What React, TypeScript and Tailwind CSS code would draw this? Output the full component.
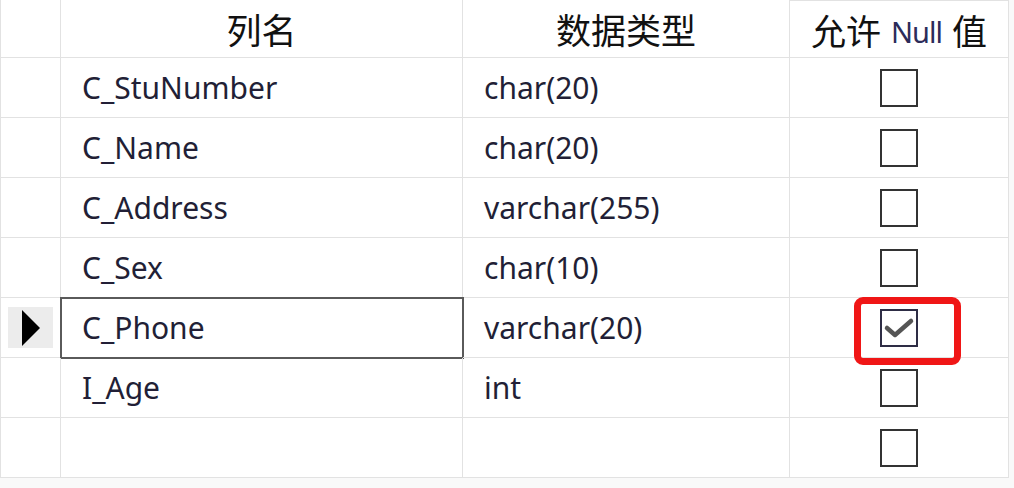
import React from "react";

type Row = { name: string; type: string; checked: boolean; selected?: boolean };

const rows: Row[] = [
  { name: "C_StuNumber", type: "char(20)", checked: false },
  { name: "C_Name", type: "char(20)", checked: false },
  { name: "C_Address", type: "varchar(255)", checked: false },
  { name: "C_Sex", type: "char(10)", checked: false },
  { name: "C_Phone", type: "varchar(20)", checked: true, selected: true },
  { name: "I_Age", type: "int", checked: false },
  { name: "", type: "", checked: false },
];

const font = { fontFamily: '"Noto Sans", "Noto Sans CJK SC", sans-serif' };

function CheckBox({ checked }: { checked: boolean }) {
  return (
    <div
      className={
        "w-[38px] h-[38px] border-2 bg-white flex items-center justify-center " +
        (checked ? "border-[#2e2d45]" : "border-[#333333]")
      }
    >
      {checked && (
        <svg width="32" height="26" viewBox="0 0 32 26">
          <path
            d="M4 13 L12 20 L28 6"
            fill="none"
            stroke="#555555"
            strokeWidth="4.5"
            strokeLinecap="round"
            strokeLinejoin="round"
          />
        </svg>
      )}
    </div>
  );
}

export default function App() {
  return (
    <div className="w-[1014px] h-[488px] bg-[#f9f9f9] overflow-hidden" style={font}>
      <div className="w-[1008px] bg-white grid grid-cols-[60px_402px_327px_219px] border-l border-[#e2e2e2]">
        {/* header */}
        <div className="h-[58px] border-r border-b border-[#e2e2e2]" />
        <div className="h-[58px] border-r border-b border-[#e2e2e2] flex items-center justify-center pt-[6px] text-[35px] text-[#111]">
          列名
        </div>
        <div className="h-[58px] border-r border-b border-[#e2e2e2] flex items-center justify-center pt-[6px] text-[35px] text-[#111]">
          数据类型
        </div>
        <div className="h-[58px] border-r border-b border-t border-[#e2e2e2] flex items-center justify-center pt-[6px] text-[35px] text-[#111]">
          <span>允许</span>
          <span className="text-[29px] text-[#2c2c5a] mx-[10px] tracking-[-1px]">Null</span>
          <span>值</span>
        </div>

        {rows.map((r, i) => (
          <React.Fragment key={i}>
            <div className="h-[60px] border-r border-b border-[#e2e2e2] flex items-center justify-center">
              {r.selected && (
                <div className="w-[45px] h-[41px] bg-[#ececec] flex items-center justify-center">
                  <svg width="20" height="36" viewBox="0 0 20 36">
                    <path d="M1 0 L19 18 L1 36 Z" fill="#000" />
                  </svg>
                </div>
              )}
            </div>
            <div
              className={
                "h-[60px] border-r border-b border-[#e2e2e2] flex items-center pl-[21px] text-[30px] text-[#221f36] " +
                (r.selected ? "outline-2 outline-[#5a5a5a] -outline-offset-1" : "")
              }
            >
              {r.name}
            </div>
            <div className="h-[60px] border-r border-b border-[#e2e2e2] flex items-center pl-[21px] text-[30px] text-[#221f36]">
              {r.type}
            </div>
            <div className="relative h-[60px] border-r border-b border-[#e2e2e2] flex items-center justify-center">
              <CheckBox checked={r.checked} />
              {r.selected && (
                <div className="absolute left-[64px] top-[-1px] w-[107px] h-[68px] border-[7px] border-[#f01616] rounded-[9px] z-10" />
              )}
            </div>
          </React.Fragment>
        ))}
      </div>
    </div>
  );
}
